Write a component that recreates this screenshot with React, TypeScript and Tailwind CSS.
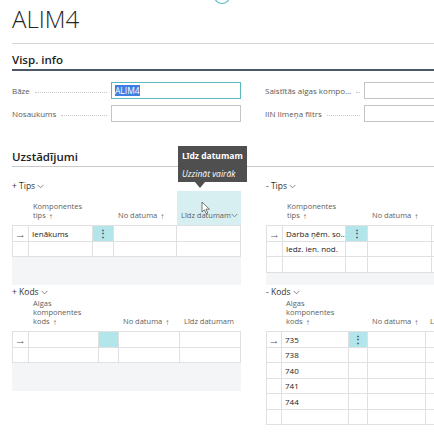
import React from "react";

type Row = { text?: string; cur?: boolean; dots?: boolean };
type Head = { lines?: string[]; sort?: boolean; hl?: boolean; chevron?: boolean };

function Chevron({ className = "" }: { className?: string }) {
  return (
    <svg className={className} width="7" height="5" viewBox="0 0 7 5" fill="none">
      <path d="M0.6 0.9 L3.5 3.8 L6.4 0.9" stroke="#6b6b6b" strokeWidth="0.8" />
    </svg>
  );
}

function Field({ label, value, focused }: { label: string; value?: string; focused?: boolean }) {
  return (
    <div className="flex h-[17px] items-center">
      <div className="flex w-[99px] items-center pr-[4px]">
        <span className="shrink-0 text-[8px] leading-[10px] text-[#5a5a5a]">{label}</span>
        <span className="ml-[5px] mt-[3px] h-0 flex-1 border-b border-dotted border-[#c8c8c8]" />
      </div>
      <div
        className={`flex h-[17px] w-[130px] items-center border bg-white px-[3px] ${
          focused ? "border-[#5ab8c1]" : "border-[#c4c4c4]"
        }`}
      >
        {value && (
          <span className="bg-[#3c80e2] text-[8.5px] leading-[11px] text-white">{value}</span>
        )}
      </div>
    </div>
  );
}

function Part({
  caption,
  cols,
  heads,
  rows,
  className = "",
}: {
  caption: string;
  cols: string[];
  heads: Head[];
  rows: Row[];
  className?: string;
}) {
  return (
    <div className={className}>
      <div className="flex h-[10px] items-center gap-[2px] text-[8.5px] leading-[10px] text-[#333]">
        <span>{caption}</span>
        <Chevron className="mt-[1px]" />
      </div>
      <div className="flex h-[34px]">
        {cols.map((w, i) => {
          const h = heads[i] || {};
          return (
            <div
              key={i}
              className={`${w} flex shrink-0 flex-col justify-end pb-[5px] pl-[4px] text-[7.5px] leading-[9px] text-[#616161] ${
                h.hl ? "bg-[#d8eff1]" : ""
              }`}
            >
              {h.lines?.map((l, j) => (
                <div key={j} className="flex items-center whitespace-nowrap">
                  <span>{l}</span>
                  {h.sort && j === h.lines!.length - 1 && <span className="ml-[3px] text-[8px]">↑</span>}
                  {h.chevron && <Chevron className="ml-auto mr-[3px]" />}
                </div>
              ))}
            </div>
          );
        })}
      </div>
      <div className="min-h-[60px] bg-[#f4f5f7]">
        <div className="border-t border-[#e0e0e0] bg-white">
          {rows.map((r, ri) => (
            <div key={ri} className="flex h-[15.5px] border-b border-[#e0e0e0]">
              {cols.map((w, i) => (
                <div
                  key={i}
                  className={`${w} flex shrink-0 items-center overflow-hidden border-r border-[#e0e0e0] ${
                    i === 0 ? "justify-center border-l" : ""
                  } ${i === 2 && r.cur ? "justify-center bg-[#b3e6ea]" : ""}`}
                >
                  {i === 0 && r.cur && <span className="text-[11px] leading-none text-[#5c5c5c]">→</span>}
                  {i === 1 && r.text && (
                    <span className="whitespace-nowrap pl-[3px] text-[8px] leading-[11px] text-[#222]">{r.text}</span>
                  )}
                  {i === 2 && r.cur && r.dots && (
                    <span className="text-[10px] font-bold leading-none text-[#3f4a55]">⋮</span>
                  )}
                </div>
              ))}
            </div>
          ))}
        </div>
      </div>
    </div>
  );
}

export default function App() {
  return (
    <div className="relative h-[445px] w-[434px] overflow-hidden bg-white font-['Open_Sans',sans-serif] text-[#212121]">
      <svg className="absolute left-[213px] top-[-13px]" width="18" height="18" viewBox="0 0 18 18">
        <circle cx="9" cy="9" r="7.5" fill="none" stroke="#5bbec4" strokeWidth="1.2" />
      </svg>

      <div className="w-[620px] pl-3">
        <h1 className="mt-[4px] h-[30px] text-[24px] font-light leading-[30px] text-[#262626]">ALIM4</h1>
        <div className="mt-[9px] border-t border-[#d6d6d6]" />

        <div className="mt-[9px] border-b-2 border-[#4c586a] pb-[2px]">
          <h2 className="text-[11.5px] font-semibold leading-[14px]">Visp. info</h2>
        </div>

        <div className="mt-[11px] grid grid-cols-[229px_229px] gap-x-[24px] gap-y-[6px]">
          <Field label="Bāze" value="ALIM4" focused />
          <Field label="Saistītās algas kompo…" />
          <Field label="Nosaukums" />
          <Field label="IIN Ilmeņa filtrs" />
        </div>

        <div className="mt-[28px] border-b border-[#c8c8c8] pb-[2px]">
          <h2 className="text-[11.5px] font-semibold leading-[14px]">Uzstādījumi</h2>
        </div>

        <div className="mt-[14px] grid grid-cols-[229px_260px] gap-x-[25px]">
          <Part
            caption="+ Tips"
            cols={["w-[17px]", "w-[64px]", "w-[21px]", "w-[63px]", "w-[64px]"]}
            heads={[
              {},
              { lines: ["Komponentes", "tips"], sort: true },
              {},
              { lines: ["No datuma"], sort: true },
              { lines: ["Līdz datumam"], hl: true, chevron: true },
            ]}
            rows={[{ text: "Ienākums", cur: true, dots: true }, {}]}
          />
          <Part
            caption="- Tips"
            cols={["w-[17px]", "w-[63px]", "w-[22px]", "w-[64px]", "w-[64px]"]}
            heads={[{}, { lines: ["Komponentes", "tips"], sort: true }, {}, { lines: ["No datuma"], sort: true }, {}]}
            rows={[{ text: "Darba ņēm. so…", cur: true, dots: true }, { text: "Iedz. ien. nod." }, {}]}
          />
          <Part
            className="mt-[2px]"
            caption="+ Kods"
            cols={["w-[17px]", "w-[70px]", "w-[20px]", "w-[61px]", "w-[61px]"]}
            heads={[
              {},
              { lines: ["Algas", "komponentes", "kods"], sort: true },
              {},
              { lines: ["No datuma"], sort: true },
              { lines: ["Līdz datumam"] },
            ]}
            rows={[{ cur: true }, {}]}
          />
          <Part
            className="mt-[2px]"
            caption="- Kods"
            cols={["w-[16px]", "w-[67px]", "w-[19px]", "w-[58px]", "w-[64px]"]}
            heads={[
              {},
              { lines: ["Algas", "komponentes", "kods"], sort: true },
              {},
              { lines: ["No datuma"], sort: true },
              { lines: ["Līdz datumam"] },
            ]}
            rows={[{ text: "735", cur: true, dots: true }, { text: "738" }, { text: "740" }, { text: "741" }, { text: "744" }, {}]}
          />
        </div>
      </div>

      {/* tooltip */}
      <div className="absolute left-[178px] top-[146px] h-[36px] w-[69px] bg-[#4f4f4f] pl-[4px] pt-[4px] text-white">
        <div className="text-[8.5px] font-bold leading-[11px]">Līdz datumam</div>
        <div className="mt-[7px] text-[8.5px] italic leading-[11px]">Uzzināt vairāk</div>
      </div>
      <div className="absolute left-[195px] top-[182px] h-0 w-0 border-x-[5px] border-t-[6px] border-x-transparent border-t-[#4f4f4f]" />

      {/* mouse pointer */}
      <svg className="absolute left-[201px] top-[201px]" width="10" height="14" viewBox="0 0 10 14">
        <path d="M1 1 L1 11 L3.4 8.8 L5.2 12.8 L6.8 12.1 L5 8.2 L8.4 8.2 Z" fill="#fff" stroke="#555" strokeWidth="0.8" strokeLinejoin="round" />
      </svg>
    </div>
  );
}
